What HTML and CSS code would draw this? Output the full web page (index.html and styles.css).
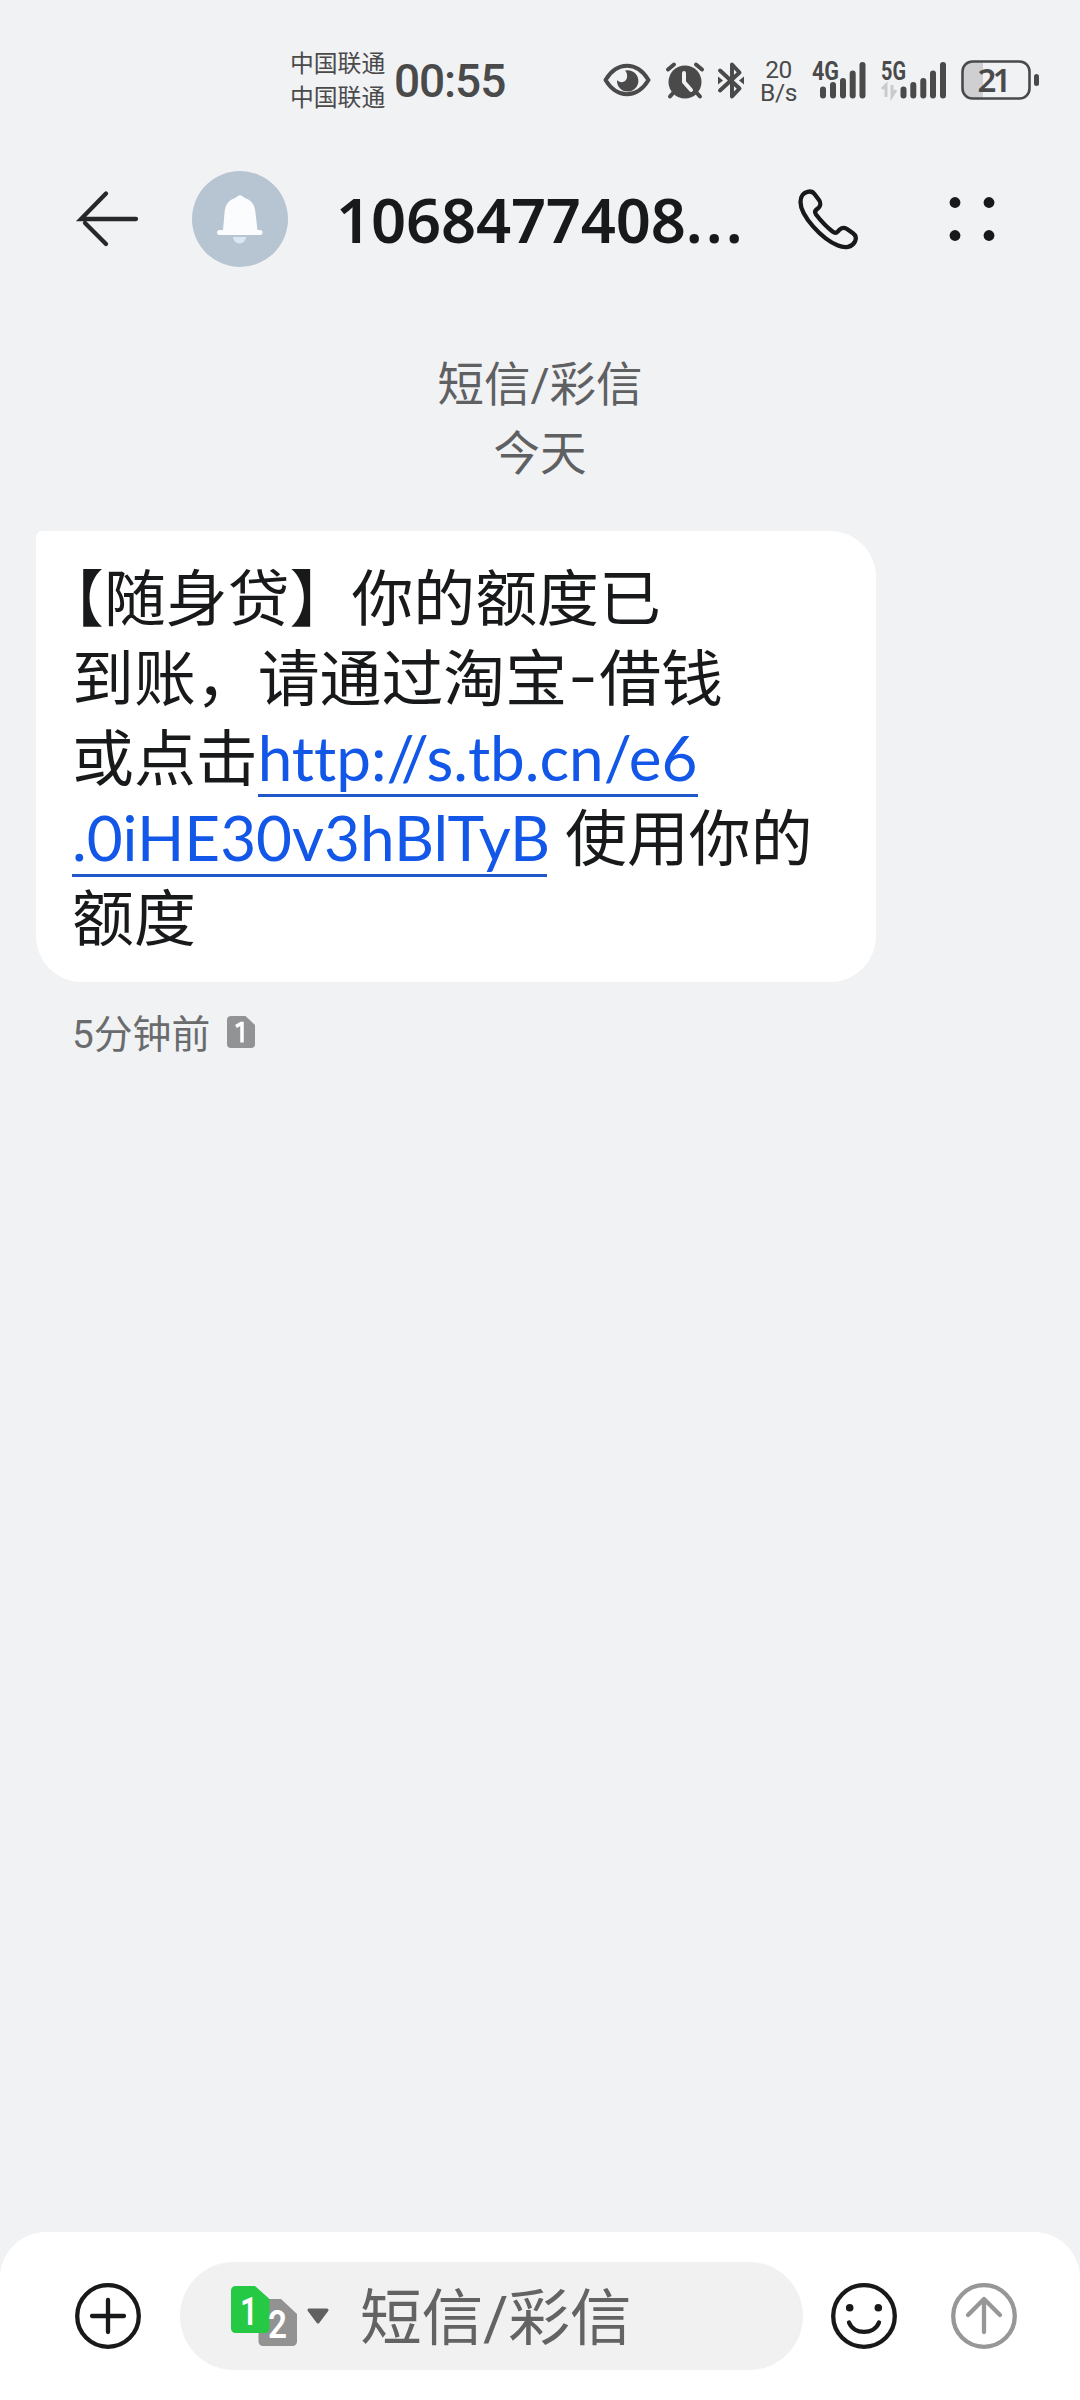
FILE: index.html
```html
<!DOCTYPE html>
<html lang="zh-CN">
<head>
<meta charset="utf-8">
<title>短信</title>
<link rel="stylesheet" href="styles.css">
</head>
<body>
<div class="screen">
  <div class="status">
    <div class="carriers"><span>中国联通</span><span>中国联通</span></div>
    <div class="clock">00:55</div>
    <svg class="eye" width="48" height="34" viewBox="0 0 48 34" fill="none">
      <path d="M2.500 17C8 8 15 2.800 24 2.800S40 8 45.500 17C40 26 33 31.200 24 31.200S8 26 2.500 17Z" stroke="#4a4a4b" stroke-width="4" stroke-linejoin="round"/>
      <path d="M22 7.500a10.700 10.700 0 1 1-8 9.500c2 2.500 6 3 8.500.5S24.500 10 22 7.500Z" fill="#4a4a4b"/>
    </svg>
    <svg class="alarm" width="38" height="37" viewBox="0 0 38 37" fill="none">
      <circle cx="19" cy="20" r="16.500" fill="#4a4a4b"/>
      <path d="M2 7.500 8 2.500M30 2.500l6 5M8 30l-4 4.500M30 30l4 4.500" stroke="#4a4a4b" stroke-width="4" stroke-linecap="round"/>
      <path d="M18 11v9l7 8" stroke="#f1f2f4" stroke-width="4" stroke-linecap="round" stroke-linejoin="round"/>
    </svg>
    <svg class="bluetooth" width="28" height="37" viewBox="0 0 28 37" fill="none">
      <path d="M3 8.500 22.500 26.500 15 34.500V2.500L22.500 10.500 3 28.500" stroke="#4a4a4b" stroke-width="4" stroke-linecap="round" stroke-linejoin="round"/>
      <path d="M1 14.500 6 18.500 1 22.500ZM27 14.500 22 18.500 27 22.500Z" fill="#4a4a4b"/>
    </svg>
    <div class="speed"><span>20</span><span>B/s</span></div>
    <svg class="signal" width="56" height="40" viewBox="0 0 56 40">
      <text class="net" x="0" y="20" textLength="27" lengthAdjust="spacingAndGlyphs">4G</text>
      <path d="M11 29.500v6M21 25v10.500M31 21v14.500M40.700 13.500v22M50.500 5v30.500" stroke="#4a4a4b" stroke-width="6" stroke-linecap="round"/>
    </svg>
    <svg class="signal second" width="68" height="40" viewBox="0 0 68 40">
      <text class="net" x="1" y="20" textLength="25" lengthAdjust="spacingAndGlyphs">5G</text>
      <path d="M2 30l4-4v12M16 31l-4 6V26" transform="translate(0 -1)" stroke="#c9cacc" stroke-width="3" fill="none"/>
      <path d="M23.500 29.500v6M33.300 25v10.500M43.300 21v14.500M53 13.500v22M63 5v30.500" stroke="#4a4a4b" stroke-width="6" stroke-linecap="round"/>
    </svg>
    <svg class="battery" width="80" height="40" viewBox="0 0 80 40">
      <path d="M22 2H12A10 10 0 0 0 2 12V28A10 10 0 0 0 12 38H22Z" fill="#cfcfd1"/>
      <rect x="1.500" y="1.500" width="67" height="37" rx="10" fill="none" stroke="#4a4a4b" stroke-width="2.600"/>
      <path d="M75.500 16.500v7" stroke="#4a4a4b" stroke-width="5" stroke-linecap="round"/>
      <text class="level" x="16.500" y="32" textLength="34">21</text>
    </svg>
  </div>

  <header class="header">
    <svg class="back" width="64" height="60" viewBox="0 0 64 60" fill="none" stroke="#27282a" stroke-width="4.300" stroke-linecap="round">
      <path d="M59 30H4L29 4.500M8 34 29 55"/>
    </svg>
    <svg class="avatar" width="96" height="96" viewBox="0 0 96 96">
      <circle cx="48" cy="48" r="48" fill="#b7c4d1"/>
      <path d="M41 66H54A6.500 6.500 0 0 1 41 66Z" fill="#d9e6f3"/>
      <path d="M44 26.500Q48 22 52 26.500C60 29.500 63 34 63.500 42L65.500 59H68a2.500 2.500 0 0 1 0 5H27.500a2.500 2.500 0 0 1 0-5H31L32.500 42C33 34 36 29.500 44 26.500Z" fill="#fafcfe"/>
    </svg>
    <h1 class="number">1068477408<span class="dots">...</span></h1>
    <svg class="phone" width="64" height="64" viewBox="0 0 64 64" fill="none" stroke="#18191a" stroke-width="4.300" stroke-linejoin="round">
      <path d="M4.500 15C4.500 9 8 5.500 11.500 4.800C14.500 4 17 5 18.500 7L23 13C25 15.700 24.500 19 22.500 20.800L20.500 22.500C18.500 24.200 18.800 25.800 20 27.500C25 34 30 39.500 36.500 44.500C38.500 46 40.500 46 42 44.300L44 42.300C46 40.500 48.500 40.500 51 42L57 46.300C60 48.500 60.500 51.500 59 54.500C56 60.500 49 61.500 42 58.500C26 52 4.500 29 4.500 15Z"/>
    </svg>
    <svg class="more" width="46" height="46" viewBox="0 0 46 46" fill="#18191a">
      <circle cx="6" cy="6.500" r="5.400"/><circle cx="40" cy="6.500" r="5.400"/><circle cx="6" cy="39.500" r="5.400"/><circle cx="40" cy="39.500" r="5.400"/>
    </svg>
  </header>

  <main class="thread">
    <div class="day"><span>短信/彩信</span><span>今天</span></div>
    <div class="bubble">
      <div class="line first"><span class="cjk">【随身贷】你的额度已</span></div>
      <div class="line"><span class="cjk">到账，请通过淘宝</span><span class="dash">-</span><span class="cjk">借钱</span></div>
      <div class="line"><span class="cjk">或点击</span><a class="link host">http://s.tb.cn/e6</a></div>
      <div class="line"><a class="link path">.0iHE30v3hBlTyB</a><span class="cjk after">使用你的</span></div>
      <div class="line"><span class="cjk">额度</span></div>
    </div>
    <div class="meta">
      <span>5分钟前</span>
      <svg width="28" height="32" viewBox="0 0 28 32">
        <path d="M4 0H18.500L28 9V28a4 4 0 0 1-4 4H4a4 4 0 0 1-4-4V4A4 4 0 0 1 4 0Z" fill="#929394"/>
        <path d="M9 10.500 14 7.500H15V26.500" fill="none" stroke="#fff" stroke-width="3.500"/>
      </svg>
    </div>
  </main>

  <footer class="composer">
    <svg class="add" width="66" height="66" viewBox="0 0 66 66" fill="none" stroke="#18191a" stroke-width="4.300" stroke-linecap="round">
      <circle cx="33" cy="33" r="30.800"/><path d="M33 17V49M17 33H49"/>
    </svg>
    <div class="field">
      <svg class="sims" width="66" height="60" viewBox="0 0 66 60">
        <path d="M32 13H50L66 28V55.500a4.500 4.500 0 0 1-4.500 4.500H32a4.500 4.500 0 0 1-4.500-4.500V13Z" fill="#929292"/>
        <path d="M4.500 0H24L38.500 13V42.500a4.500 4.500 0 0 1-4.500 4.500H4.500A4.500 4.500 0 0 1 0 42.500V4.500A4.500 4.500 0 0 1 4.500 0Z" fill="#26c943"/>
        <text class="sim-digit" x="9" y="39" textLength="18" lengthAdjust="spacingAndGlyphs">1</text>
        <text class="sim-digit" x="37" y="52" textLength="19" lengthAdjust="spacingAndGlyphs">2</text>
      </svg>
      <svg class="caret" width="22" height="16" viewBox="0 0 22 16"><path d="M2 2H20L11 14Z" fill="#606060" stroke="#606060" stroke-width="3" stroke-linejoin="round"/></svg>
      <span class="placeholder">短信/彩信</span>
    </div>
    <svg class="smile" width="66" height="66" viewBox="0 0 66 66" fill="none" stroke="#18191a" stroke-width="4.300" stroke-linecap="round">
      <circle cx="33" cy="33" r="30.800"/><path d="M18 39.500C23 52 43 52 48 39.500"/>
      <g fill="#18191a" stroke="none"><circle cx="18.700" cy="24.800" r="3.800"/><circle cx="47.300" cy="24.800" r="3.800"/></g>
    </svg>
    <svg class="send" width="66" height="66" viewBox="0 0 66 66" fill="none" stroke="#979797" stroke-width="4.300" stroke-linecap="round" stroke-linejoin="round">
      <circle cx="33" cy="33" r="30.800"/><path d="M33 49V17M17 32 33 16 49 32"/>
    </svg>
  </footer>
</div>
</body>
</html>
```
FILE: styles.css
```css
* { box-sizing: border-box; }
body { margin: 0; }
svg { display: block; flex: none; overflow: visible; }
.screen {
  width: 1080px;
  height: 2400px;
  display: flex;
  flex-direction: column;
  background: #f1f2f4;
  color: #18191a;
  font-family: Roboto, "Noto Sans CJK SC", sans-serif;
  white-space: nowrap;
  overflow: hidden;
}
.status {
  height: 160px;
  padding-left: 290px;
  display: flex;
  align-items: center;
  color: #4a4a4b;
  flex: none;
}
.carriers {
  width: 104px;
  padding-bottom: 2px;
  display: flex;
  flex-direction: column;
  font: 23.800px/34px "Noto Sans CJK SC", sans-serif;
}
.clock {
  width: 209px;
  padding-top: 2px;
  font-size: 46px;
  font-weight: 500;
  letter-spacing: -1.100px;
  line-height: 54px;
}
.alarm { margin-left: 15px; }
.bluetooth { margin-left: 13px; }
.speed {
  width: 67px;
  padding-top: 2px;
  display: flex;
  flex-direction: column;
  align-items: center;
  font-size: 24.500px;
  letter-spacing: -0.400px;
  line-height: 23px;
}
.signal.second { margin-left: 12px; }
.battery { margin-left: 13px; }
.net { font: 700 25px Roboto, sans-serif; fill: #4a4a4b; }
.level { font: 600 33px "Noto Sans", sans-serif; fill: #4a4a4b; }

.header {
  height: 118px;
  padding-left: 77px;
  display: flex;
  align-items: center;
  flex: none;
}
.avatar { margin-left: 51px; }
.number {
  width: 455px;
  margin: 0;
  padding-left: 48px;
  font: 600 61.500px/80px "Noto Sans", "Noto Sans CJK SC", sans-serif;
  letter-spacing: -0.200px;
}
.dots { letter-spacing: 3px; }
.phone { margin-left: 53px; }
.more { margin-left: 89px; }

.thread { flex: 1; }
.day {
  height: 253px;
  padding-top: 73px;
  display: flex;
  flex-direction: column;
  align-items: center;
  font-size: 46.500px;
  line-height: 69px;
  color: #5f6062;
}
.bubble {
  width: 840px;
  height: 451px;
  margin-left: 36px;
  padding: 26px 0 0 36px;
  background: #fff;
  border-radius: 6px 46px 46px 46px;
  font-size: 61.900px;
}
.line { height: 80px; line-height: 80px; display: flex; }
.cjk { padding-top: 3px; }
.first { margin-left: -30px; }
.dash { width: 32px; text-align: center; transform: scaleX(1.400); }
.link {
  height: 77px;
  font: 400 62px/81px Lato, sans-serif;
  font-variant-ligatures: none;
  color: #1257e8;
  border-bottom: 3px solid #2058cc;
  box-sizing: content-box;
}
.host { width: 440px; }
.path { width: 475px; }
.after { margin-left: 18px; }
.meta {
  height: 98px;
  padding-left: 72px;
  display: flex;
  align-items: center;
  gap: 17px;
  font-size: 38.800px;
  color: #6a6b6d;
}
.meta svg { margin-top: 2px; }
.composer {
  height: 168px;
  padding-left: 75px;
  display: flex;
  align-items: center;
  background: #fff;
  border-radius: 46px 46px 0 0;
  flex: none;
}
.field {
  width: 623px;
  height: 108px;
  margin-left: 39px;
  padding-left: 51px;
  display: flex;
  align-items: center;
  background: #f1f1f1;
  border-radius: 54px;
}
.sim-digit { font: 600 38px Roboto, sans-serif; fill: #fff; }
.caret { margin-left: 10px; }
.placeholder {
  margin-left: 31px;
  padding-top: 5px;
  font-size: 61.800px;
  letter-spacing: -0.300px;
  line-height: 90px;
  color: #636363;
}
.smile { margin-left: 28px; }
.send { margin-left: 54px; }
```
